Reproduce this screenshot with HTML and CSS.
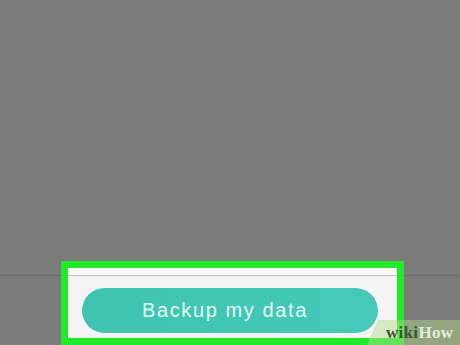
FILE: index.html
```html
<!DOCTYPE html>
<html>
<head>
<meta charset="utf-8">
<link rel="stylesheet" href="styles.css">
</head>
<body>
<div class="screen">
  <div class="top"></div>
  <div class="bottom"></div>
  <div class="highlight">
    <div class="panel">
      <div class="panel-head"></div>
      <div class="panel-body">
        <div class="btn">Backup my data</div>
      </div>
    </div>
  </div>
  <div class="watermark"><span class="wiki">wiki</span><span class="how">How</span></div>
</div>
</body>
</html>
```
FILE: styles.css
```css
html, body {
  margin: 0;
  padding: 0;
}
body {
  background: #7b7b7b;
  font-family: "Liberation Sans", Arial, sans-serif;
}
.screen {
  position: relative;
  width: 460px;
  height: 345px;
  overflow: hidden;
  background: #7b7b7b;
}
.top {
  height: 275px;
  border-bottom: 1px solid #6d6d6d;
}
.highlight {
  position: absolute;
  left: 61px;
  top: 261px;
  width: 343px;
  height: 84px;
  box-sizing: border-box;
  border: 7px solid #22ea2a;
  background: #f4f4f4;
}
.panel {
  height: 100%;
  display: flex;
  flex-direction: column;
}
.panel-head {
  height: 7px;
  background: #f9f9f9;
  border-bottom: 1px solid #c2c2c2;
}
.panel-body {
  flex: 1;
  padding: 12px 0 0 14px;
}
.btn {
  width: 296px;
  height: 45px;
  border-radius: 23px;
  background: linear-gradient(90deg, #3fc4b2, #46c9b8);
  color: #e2f9f4;
  font-size: 20px;
  letter-spacing: 1.6px;
  line-height: 45px;
  text-align: center;
  padding-right: 10px;
  box-sizing: border-box;
}
.watermark {
  position: absolute;
  left: 367px;
  top: 320px;
  width: 93px;
  height: 25px;
  box-sizing: border-box;
  padding-left: 19px;
  background: rgba(175, 220, 135, 0.45);
  clip-path: polygon(11px 0, 100% 0, 100% 100%, 0 100%);
  font-family: "Liberation Serif", "Times New Roman", serif;
  font-weight: bold;
  font-size: 17px;
  line-height: 25px;
  letter-spacing: 0.3px;
}
.wiki {
  color: #3d5533;
}
.how {
  color: #e6ecde;
}
```
